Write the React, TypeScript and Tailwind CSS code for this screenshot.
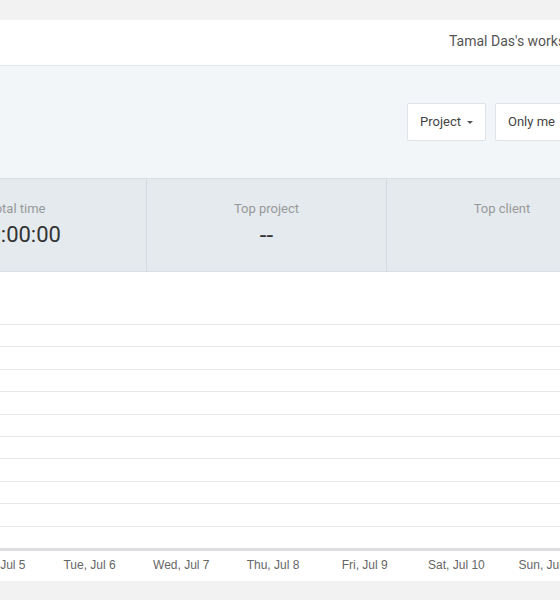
import { Fragment } from 'react';

const days = ['Mon, Jul 5', 'Tue, Jul 6', 'Wed, Jul 7', 'Thu, Jul 8', 'Fri, Jul 9', 'Sat, Jul 10', 'Sun, Jul 11'];

const gridRows = Array.from({ length: 10 });

function Caret() {
  return (
    <svg width="6" height="3" viewBox="0 0 6 3" className="shrink-0">
      <path d="M0 0h6L3 3z" fill="#555" />
    </svg>
  );
}

function FilterButton({ label }: { label: string }) {
  return (
    <button className="flex h-[38px] shrink-0 items-center gap-[6px] rounded-[2px] border border-[#dde3e8] bg-white px-[12px] text-[13px] text-[#444]">
      {label}
      <Caret />
    </button>
  );
}

export default function App() {
  return (
    <div className="h-[600px] w-[560px] overflow-hidden bg-[#f2f2f3] pt-5 font-['Roboto',sans-serif]">
      <div className="bg-white">
        {/* header */}
        <div className="flex h-[46px] items-center border-b border-[#dfe5ea] pb-[3px]">
          <span className="ml-[449px] whitespace-nowrap text-[14px] text-[#555]">Tamal Das's workspace</span>
        </div>

        {/* filters */}
        <div className="flex h-[112px] items-center gap-[9px] bg-[#f2f6f9] pl-[407px]">
          <FilterButton label="Project" />
          <FilterButton label="Only me" />
        </div>

        {/* stats */}
        <div className="flex h-[94px] border-y border-[#d9e0e5] bg-[#e4eaee]">
          <div className="ml-[-147px] flex w-[294px] shrink-0 flex-col items-center justify-center border-r border-[#d3dbe0]">
            <span className="pl-[34px] text-[13px] leading-4 text-[#999]">Total time</span>
            <span className="mt-1 pl-[38px] text-[22px] leading-7 text-[#333]">00:00:00</span>
          </div>
          <div className="flex w-[240px] shrink-0 flex-col items-center justify-center border-r border-[#d3dbe0]">
            <span className="text-[13px] leading-4 text-[#999]">Top project</span>
            <span className="mt-1 text-[24px] leading-7 text-[#333]">--</span>
          </div>
          <div className="flex w-[230px] shrink-0 flex-col items-center justify-center">
            <span className="text-[13px] leading-4 text-[#999]">Top client</span>
            <span className="mt-1 text-[24px] leading-7 text-transparent">--</span>
          </div>
        </div>

        {/* chart */}
        <div className="pt-[52px]">
          {gridRows.map((_, i) => (
            <div key={i} className="h-[22.4px] border-t border-[#e8e8e8]" />
          ))}
          <div className="h-[3px] bg-[#dcdde0]" />
          <div className="ml-[-48px] grid w-[642px] grid-cols-7 pb-[8px] pt-[6px] font-['Liberation_Sans',Arial,sans-serif] text-[12px] leading-4 text-[#666]">
            {days.map((d) => (
              <Fragment key={d}>
                <span className="whitespace-nowrap text-center">{d}</span>
              </Fragment>
            ))}
          </div>
        </div>
      </div>
    </div>
  );
}
